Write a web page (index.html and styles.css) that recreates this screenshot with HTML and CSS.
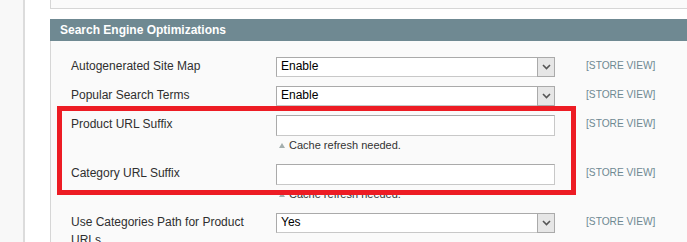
FILE: index.html
```html
<!DOCTYPE html>
<html>
<head>
<meta charset="utf-8">
<link rel="stylesheet" href="styles.css">
</head>
<body>
<div class="page">
  <div class="rail"></div>
  <div class="content">
    <div class="prev-panel"></div>
    <div class="section-head">Search Engine Optimizations</div>
    <div class="fieldset">
      <div class="row">
        <div class="label">Autogenerated Site Map</div>
        <div class="value">
          <div class="select"><span class="select-text">Enable</span><span class="arrow"><svg width="9" height="6" viewBox="0 0 9 6"><path d="M1 1 L4.5 4.5 L8 1" fill="none" stroke="#555" stroke-width="1.6"/></svg></span></div>
        </div>
        <div class="scope">[STORE VIEW]</div>
      </div>
      <div class="row">
        <div class="label">Popular Search Terms</div>
        <div class="value">
          <div class="select"><span class="select-text">Enable</span><span class="arrow"><svg width="9" height="6" viewBox="0 0 9 6"><path d="M1 1 L4.5 4.5 L8 1" fill="none" stroke="#555" stroke-width="1.6"/></svg></span></div>
        </div>
        <div class="scope">[STORE VIEW]</div>
      </div>
      <div class="row">
        <div class="label">Product URL Suffix</div>
        <div class="value">
          <div class="input"></div>
          <div class="note"><span class="tri"></span>Cache refresh needed.</div>
        </div>
        <div class="scope">[STORE VIEW]</div>
      </div>
      <div class="row">
        <div class="label">Category URL Suffix</div>
        <div class="value">
          <div class="input"></div>
          <div class="note"><span class="tri"></span>Cache refresh needed.</div>
        </div>
        <div class="scope">[STORE VIEW]</div>
      </div>
      <div class="row">
        <div class="label">Use Categories Path for Product URLs</div>
        <div class="value">
          <div class="select"><span class="select-text">Yes</span><span class="arrow"><svg width="9" height="6" viewBox="0 0 9 6"><path d="M1 1 L4.5 4.5 L8 1" fill="none" stroke="#555" stroke-width="1.6"/></svg></span></div>
        </div>
        <div class="scope">[STORE VIEW]</div>
      </div>
    </div>
  </div>
  <div class="highlight"></div>
</div>
</body>
</html>
```

FILE: styles.css
```css
html, body {
  margin: 0;
  padding: 0;
}
body {
  background: #ffffff;
  font-family: "Liberation Sans", Arial, sans-serif;
  font-size: 12px;
  color: #2f2f2f;
  overflow: hidden;
}
.page {
  position: relative;
  display: flex;
  height: 242px;
  overflow: hidden;
}
.rail {
  width: 23px;
  flex: none;
  background: #f8f8f8;
  border-right: 2px solid #dcdcdc;
}
.content {
  flex: 1;
  padding-left: 25px;
  min-width: 0;
}
.prev-panel {
  height: 8px;
  background: #fafafa;
  border-left: 1px solid #d6d6d6;
  border-bottom: 1px solid #d6d6d6;
  margin-bottom: 10px;
}
.section-head {
  height: 22px;
  line-height: 22px;
  background: #6f8992;
  color: #ffffff;
  font-weight: bold;
  font-size: 12px;
  padding-left: 10px;
}
.fieldset {
  background: #fafafa;
  border-left: 1px solid #d6d6d6;
  padding: 16px 0 20px 20px;
}
.row {
  display: grid;
  grid-template-columns: 205px 310px auto;
  margin-bottom: 9px;
}
.row:nth-child(3), .row:nth-child(4) {
  margin-bottom: 12px;
}
.label {
  line-height: 18px;
  padding-right: 20px;
  color: #2f2f2f;
}
.value {
  width: 279px;
}
.select {
  position: relative;
  box-sizing: border-box;
  height: 20px;
  background: #ffffff;
  border: 1px solid #aaaaaa;
  border-right-color: #c8c8c8;
  border-bottom-color: #c8c8c8;
}
.select-text {
  display: block;
  padding: 0 4px;
  line-height: 16px;
  color: #000000;
  font-size: 12px;
}
.arrow {
  position: absolute;
  top: -1px;
  right: -1px;
  width: 18px;
  height: 20px;
  box-sizing: border-box;
  background: #e6e6e6;
  border: 1px solid #aaaaaa;
  display: flex;
  align-items: center;
  justify-content: center;
}
.input {
  box-sizing: border-box;
  height: 21px;
  background: #ffffff;
  border: 1px solid #aaaaaa;
  border-right-color: #c8c8c8;
  border-bottom-color: #c8c8c8;
}
.note {
  margin-top: 2px;
  line-height: 14px;
  font-size: 11px;
  color: #333333;
  padding-left: 3px;
  display: flex;
  align-items: center;
}
.tri {
  width: 0;
  height: 0;
  border-left: 3px solid transparent;
  border-right: 3px solid transparent;
  border-bottom: 5px solid #a3aeae;
  margin-right: 4px;
}
.scope {
  line-height: 18px;
  font-size: 10.2px;
  color: #6f8992;
}
.highlight {
  position: absolute;
  left: 57px;
  top: 106px;
  width: 519px;
  height: 89px;
  box-sizing: border-box;
  border: 5px solid #ed1c24;
}
```
